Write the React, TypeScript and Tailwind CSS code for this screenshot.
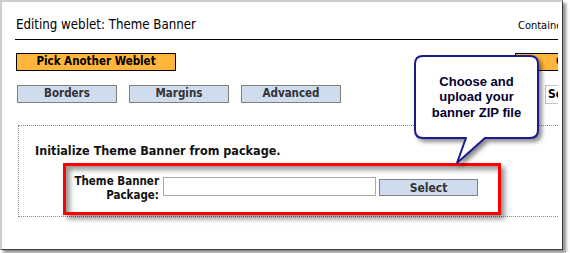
import React from 'react';

const tabs = ['Borders', 'Margins', 'Advanced'];

// speech-bubble annotation drawn over the page
function Callout() {
  return (
    <div className="absolute left-[414px] top-[55px] h-[112px] w-[128px]">
      <svg
        width="128"
        height="112"
        viewBox="0 0 128 112"
        className="absolute inset-0 drop-shadow-[3px_3px_2px_rgba(0,0,0,0.45)]"
      >
        <path
          d="M9 1H116Q124 1 124 9V75Q124 83 116 83H71L43 108L52 83H9Q1 83 1 75V9Q1 1 9 1Z"
          fill="#fff"
          stroke="#1b1b8f"
          strokeWidth="2"
          strokeLinejoin="round"
        />
      </svg>
      <div className="relative flex h-[84px] w-[125px] flex-col items-center justify-center text-center font-['Liberation_Sans',Arial,sans-serif] text-[13px] font-bold leading-[15.5px] text-[#00002e]">
        <span>Choose and</span>
        <span>upload your</span>
        <span>banner ZIP file</span>
      </div>
    </div>
  );
}

function App() {
  return (
    <div className="relative h-[253px] w-[570px] overflow-hidden bg-white font-['DejaVu_Sans_Condensed','Liberation_Sans',sans-serif] text-black">
      {/* Screenshot frame */}
      <div className="h-[250px] w-[563px] border-b border-l-2 border-r border-t-2 border-b-[#3c3c3c] border-l-[#cdcdcd] border-r-[#3c3c3c] border-t-[#cdcdcd] bg-white shadow-[3px_3px_3px_rgba(0,0,0,0.45)]">
        <div className="h-full w-[556px] overflow-hidden">
          {/* Header */}
          <div className="flex items-baseline pt-[15px]">
            <div className="ml-[14px] whitespace-nowrap text-[13.2px] leading-[16px]">Editing weblet: Theme Banner</div>
            <div className="ml-auto w-[40px] shrink-0 overflow-hidden whitespace-nowrap text-[11px] leading-[14px]">Container Settings</div>
          </div>
          <div className="ml-[13px] mt-[6px] border-t border-black" />

          {/* Action buttons */}
          <div className="mt-[13px] flex">
            <button className="ml-[14px] flex h-[18px] w-[160px] shrink-0 items-center justify-center border border-black bg-[#ffb63a] text-[11.5px] font-bold">
              Pick Another Weblet
            </button>
            <button className="ml-[339px] flex h-[18px] w-[100px] shrink-0 items-center whitespace-nowrap border border-black bg-[#ffb63a] pl-[40px] text-[11.5px] font-bold">
              Close
            </button>
          </div>

          {/* Tabs */}
          <div className="mt-[14px] flex items-start">
            <div className="ml-[15px] flex shrink-0 gap-[12px]">
              {tabs.map((t) => (
                <button
                  key={t}
                  className="flex h-[18px] w-[100px] items-center justify-center border border-[#808080] bg-[#cfdcee] text-[11.5px] font-bold text-[#333]"
                >
                  {t}
                </button>
              ))}
            </div>
            <div className="ml-[204px] h-[19px] w-[80px] shrink-0 whitespace-nowrap border border-[#c4c4c4] bg-white pl-[2px] text-[12px] font-bold leading-[17px]">
              Scripts
            </div>
          </div>

          {/* Package panel */}
          <div className="ml-[16px] mt-[21px] w-[600px] border border-dotted border-[#8a8a8a] pb-[1px] pt-[17px]">
            <div className="pl-[16px] text-[12.5px] font-bold leading-[16px] text-[#111]">
              Initialize Theme Banner from package.
            </div>
            <div className="ml-[44px] mt-[4px] flex h-[52px] w-[438px] items-start border-[3px] border-[#ff0000] shadow-[4px_4px_5px_rgba(0,0,0,0.42),inset_4px_4px_5px_rgba(0,0,0,0.4)]">
              <div className="mt-[8px] w-[93px] shrink-0 text-right text-[11.5px] font-bold leading-[14px] text-[#111]">
                Theme Banner
                <br />
                Package:
              </div>
              <input className="ml-[4px] mt-[11px] h-[19px] w-[213px] shrink-0 border border-[#a9a9a9] bg-white" />
              <button className="ml-[3px] mt-[13px] flex h-[17px] w-[99px] shrink-0 items-center justify-center border border-[#808080] bg-[#cfdcee] text-[12px] font-bold text-[#333]">
                Select
              </button>
            </div>
          </div>
        </div>
      </div>

      <Callout />
    </div>
  );
}

export default App;
